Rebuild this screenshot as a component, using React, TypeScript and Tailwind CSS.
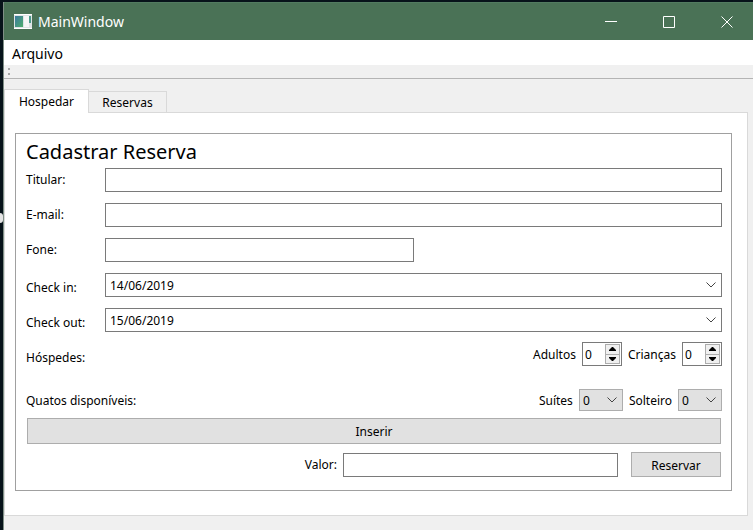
import { useState, type ReactNode } from "react";

const field = "h-6 border border-[#7a7a7a] bg-white px-1 pt-0.5 outline-none";
const button = "border border-[#adadad] bg-[#e1e1e1] pt-0.5 text-center";

function Chevron() {
  return (
    <svg
      className="pointer-events-none absolute top-1/2 right-1.5 -translate-y-1/2"
      width="10"
      height="6"
      viewBox="0 0 10 6"
      fill="none"
      stroke="#444"
      aria-hidden="true"
    >
      <path d="M0.5 0.5 5 5 9.5 0.5" />
    </svg>
  );
}

function Row({ id, label, children }: { id: string; label: string; children: ReactNode }) {
  return (
    <div className="flex items-center">
      <label htmlFor={id} className="w-[79px] shrink-0">
        {label}
      </label>
      {children}
    </div>
  );
}

function DateRow({ id, label, value }: { id: string; label: string; value: string }) {
  return (
    <div className="flex items-center">
      <label htmlFor={id} className="w-[79px] shrink-0 pt-1.5">
        {label}
      </label>
      <div className="relative flex-1">
        <select id={id} className={`${field} block w-full appearance-none`}>
          <option>{value}</option>
        </select>
        <Chevron />
      </div>
    </div>
  );
}

function Spin({ id, label }: { id: string; label: string }) {
  const [value, setValue] = useState(0);
  return (
    <div className="flex items-center gap-1.5">
      <label htmlFor={id} className="pt-0.5">
        {label}
      </label>
      <div className="flex h-6 w-10 border border-[#7a7a7a] bg-white p-px">
        <input
          id={id}
          className="w-0 flex-1 pt-0.5 pl-px outline-none"
          inputMode="numeric"
          value={value}
          onChange={(e) => setValue(Number(e.target.value) || 0)}
        />
        <div className="flex w-[15px] flex-col border border-[#adadad] bg-[#f0f0f0]">
          <button
            type="button"
            aria-label={`Aumentar ${label}`}
            className="flex flex-1 items-center justify-center border-b border-[#adadad]"
            onClick={() => setValue(value + 1)}
          >
            <svg width="7" height="4" viewBox="0 0 7 4" aria-hidden="true">
              <path d="M0 4V3L3 0H4L7 3V4Z" />
            </svg>
          </button>
          <button
            type="button"
            aria-label={`Diminuir ${label}`}
            className="flex flex-1 items-center justify-center"
            onClick={() => setValue(Math.max(0, value - 1))}
          >
            <svg width="7" height="4" viewBox="0 0 7 4" aria-hidden="true">
              <path d="M0 0V1L3 4H4L7 1V0Z" />
            </svg>
          </button>
        </div>
      </div>
    </div>
  );
}

function Combo({ id, label }: { id: string; label: string }) {
  return (
    <div className="flex items-center gap-1.5">
      <label htmlFor={id} className="pt-0.5">
        {label}
      </label>
      <div className="relative w-11">
        <select
          id={id}
          className="block h-[22px] w-full appearance-none border border-[#adadad] bg-[#e1e1e1] px-[3px] pt-0.5 outline-none"
        >
          <option>0</option>
        </select>
        <Chevron />
      </div>
    </div>
  );
}

export default function App() {
  return (
    <div className="relative min-h-screen bg-[#07131a] pt-0.5 pl-[3px] font-['Noto_Sans',sans-serif] text-xs text-black">
      <span className="absolute top-[213px] left-0 h-[10px] w-[3px] rounded-r bg-[#e4e4e4]" aria-hidden="true" />
      <div className="flex min-h-[528px] flex-col border-l border-[#7f8f86] bg-[#f0f0f0]">
        <header className="flex h-[38px] items-center border-t border-[#527b60] bg-[#4a7256] pl-[10px] text-white">
          <svg width="18" height="15" viewBox="0 0 18 15" aria-hidden="true">
            <defs>
              <linearGradient id="pane" x1="0" y1="0" x2="1" y2="1">
                <stop offset="0" stopColor="#3b78a0" />
                <stop offset="1" stopColor="#4fae6c" />
              </linearGradient>
            </defs>
            <rect width="18" height="15" fill="#dfe4e6" />
            <path d="M0 0.5H18M0 14.5H18" stroke="#fff" />
            <rect x="1" y="2" width="8" height="11" fill="url(#pane)" />
            <rect x="10" y="2" width="5" height="11" fill="#f6f6f6" />
            <rect x="15" y="2" width="2" height="7" fill="#4c9a8b" />
          </svg>
          <h1 className="ml-1.5 flex-1 text-sm">MainWindow</h1>
          <button type="button" aria-label="Minimizar" className="flex h-full w-[58px] items-center justify-center">
            <svg width="12" height="12" viewBox="0 0 12 12" stroke="currentColor" aria-hidden="true">
              <path d="M0 5.5H12" />
            </svg>
          </button>
          <button type="button" aria-label="Maximizar" className="flex h-full w-[58px] items-center justify-center">
            <svg width="12" height="12" viewBox="0 0 12 12" fill="none" stroke="currentColor" aria-hidden="true">
              <path d="M0.5 0.5H11.5V11.5H0.5Z" />
            </svg>
          </button>
          <button type="button" aria-label="Fechar" className="flex h-full w-[55px] items-center justify-center pl-[3px]">
            <svg width="12" height="12" viewBox="0 0 12 12" stroke="currentColor" aria-hidden="true">
              <path d="M0.5 0.5 11.5 11.5M11.5 0.5 0.5 11.5" />
            </svg>
          </button>
        </header>

        <nav className="flex h-[25px] items-center bg-white px-2 pt-0.5 text-sm">
          <button type="button">Arquivo</button>
        </nav>
        <div className="flex h-[14px] items-center border-b border-[#b4b4b4] pl-1">
          <svg width="2" height="7" viewBox="0 0 2 7" fill="#a6a6a6" aria-hidden="true">
            <path d="M0 0H2V2H0ZM0 5H2V7H0Z" />
          </svg>
        </div>

        <main className="pt-[10px] pr-[5px]">
          <div role="tablist" className="flex items-end">
            <button
              type="button"
              role="tab"
              aria-selected="true"
              className="relative z-10 -mb-px h-6 w-[85px] border border-b-0 border-[#d9d9d9] bg-white"
            >
              Hospedar
            </button>
            <button
              type="button"
              role="tab"
              aria-selected="false"
              className="h-[21px] w-[78px] border border-b-0 border-l-0 border-[#d9d9d9] bg-[#f0f0f0] pt-0.5"
            >
              Reservas
            </button>
          </div>

          <div role="tabpanel" className="border border-[#d9d9d9] bg-white px-[10px] pt-5 pb-6">
            <form
              className="mr-[5px] border border-[#a0a0a0] px-[9px] pt-1 pb-[13px]"
              onSubmit={(e) => e.preventDefault()}
            >
              <h2 className="mb-0.5 pl-px text-xl leading-7">Cadastrar Reserva</h2>
              <div className="flex flex-col gap-[11px] pl-px">
                <Row id="titular" label="Titular:">
                  <input id="titular" className={`${field} min-w-0 flex-1`} />
                </Row>
                <Row id="email" label="E-mail:">
                  <input id="email" className={`${field} min-w-0 flex-1`} />
                </Row>
                <Row id="fone" label="Fone:">
                  <input id="fone" className={`${field} w-1/2 max-w-[309px]`} />
                </Row>
                <DateRow id="checkin" label="Check in:" value="14/06/2019" />
                <DateRow id="checkout" label="Check out:" value="15/06/2019" />
              </div>
              <div className="mt-[10px] flex items-center justify-between pl-px">
                <span className="pt-2">Hóspedes:</span>
                <div className="flex gap-1.5">
                  <Spin id="adultos" label="Adultos" />
                  <Spin id="criancas" label="Crianças" />
                </div>
              </div>
              <div className="mt-[23px] flex items-center justify-between pl-px">
                <span className="pt-0.5">Quatos disponíveis:</span>
                <div className="flex gap-1.5">
                  <Combo id="suites" label="Suítes" />
                  <Combo id="solteiro" label="Solteiro" />
                </div>
              </div>
              <div className="mt-[7px] pr-px pl-0.5">
                <button type="button" className={`${button} block h-[26px] w-full`}>
                  Inserir
                </button>
              </div>
              <div className="mt-2 flex items-center justify-end pr-px">
                <label htmlFor="valor" className="mr-1.5">
                  Valor:
                </label>
                <input id="valor" className={`${field} mr-[13px] w-[275px]`} />
                <button type="submit" className={`${button} h-[25px] w-[90px]`}>
                  Reservar
                </button>
              </div>
            </form>
          </div>
        </main>
      </div>
    </div>
  );
}
